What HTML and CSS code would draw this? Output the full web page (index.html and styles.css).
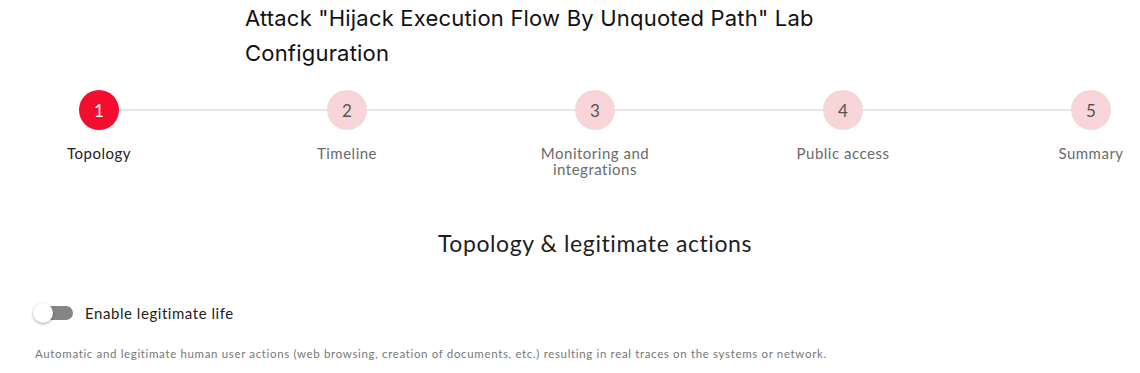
FILE: index.html
```html
<!DOCTYPE html>
<html>
<head>
<meta charset="utf-8">
<link rel="stylesheet" href="styles.css">
</head>
<body>
<div class="page">
  <h1 class="title">Attack "Hijack Execution Flow By Unquoted Path" Lab Configuration</h1>
  <div class="stepper">
    <div class="step active"><div class="dot">1</div><div class="label">Topology</div></div>
    <div class="step"><div class="dot">2</div><div class="label">Timeline</div></div>
    <div class="step"><div class="dot">3</div><div class="label">Monitoring and integrations</div></div>
    <div class="step"><div class="dot">4</div><div class="label">Public access</div></div>
    <div class="step last"><div class="dot">5</div><div class="label">Summary</div></div>
  </div>
  <h2 class="section">Topology &amp; legitimate actions</h2>
  <div class="toggle-row">
    <span class="switch"><span class="knob"></span></span>
    <span class="toggle-label">Enable legitimate life</span>
  </div>
  <p class="desc">Automatic and legitimate human user actions (web browsing, creation of documents, etc.) resulting in real traces on the systems or network.</p>
</div>
</body>
</html>
```
FILE: styles.css
```css
html, body {
  margin: 0;
  padding: 0;
  overflow: hidden;
  background: #fff;
}
.page {
  width: 1140px;
  height: 373px;
  font-family: Lato, "Noto Sans", sans-serif;
  color: #222;
}
.title {
  margin: 0 0 0 245px;
  padding-top: 1px;
  width: 610px;
  font-family: Inter, "Liberation Sans", Arial, sans-serif;
  font-weight: 400;
  font-size: 22px;
  line-height: 35px;
  letter-spacing: 0.2px;
  color: #111;
}
.stepper {
  display: grid;
  grid-template-columns: repeat(5, 112px);
  column-gap: 136px;
  margin-left: 43px;
  margin-top: 19px;
}
.step {
  position: relative;
  display: flex;
  flex-direction: column;
  align-items: center;
}
.step::after {
  content: "";
  position: absolute;
  top: 19px;
  left: calc(50% + 20px);
  width: 208px;
  height: 2px;
  background: #e6e6e6;
}
.step.last::after { display: none; }
.dot {
  width: 40px;
  height: 40px;
  border-radius: 50%;
  background: #f7d5d8;
  color: #555;
  display: flex;
  align-items: center;
  justify-content: center;
  font-size: 17px;
  position: relative;
  z-index: 1;
}
.step.active .dot {
  background: #f30d2e;
  color: #fff;
}
.label {
  margin-top: 15px;
  font-size: 15px;
  line-height: 16px;
  letter-spacing: 0.5px;
  color: #6a6a6a;
  text-align: center;
  white-space: normal;
}
.step.active .label { color: #222; }
.section {
  margin: 52px 0 0 0;
  width: 1190px;
  text-align: center;
  font-weight: 400;
  font-size: 23px;
  line-height: 28px;
  letter-spacing: 0.6px;
  color: #1e1e1e;
}
.toggle-row {
  display: flex;
  align-items: center;
  margin: 46px 0 0 35px;
  height: 20px;
}
.switch {
  position: relative;
  width: 36px;
  height: 14px;
  margin-left: 2px;
  border-radius: 7px;
  background: #858585;
}
.knob {
  position: absolute;
  left: -4px;
  top: -3px;
  width: 20px;
  height: 20px;
  border-radius: 50%;
  background: #fff;
  box-shadow: 0 1px 3px rgba(0,0,0,0.35);
}
.toggle-label {
  margin-left: 12px;
  font-size: 15px;
  letter-spacing: 0.55px;
  color: #222;
}
.desc {
  margin: 24px 0 0 35px;
  font-size: 11.5px;
  color: #777;
  letter-spacing: 0.65px;
}
```
